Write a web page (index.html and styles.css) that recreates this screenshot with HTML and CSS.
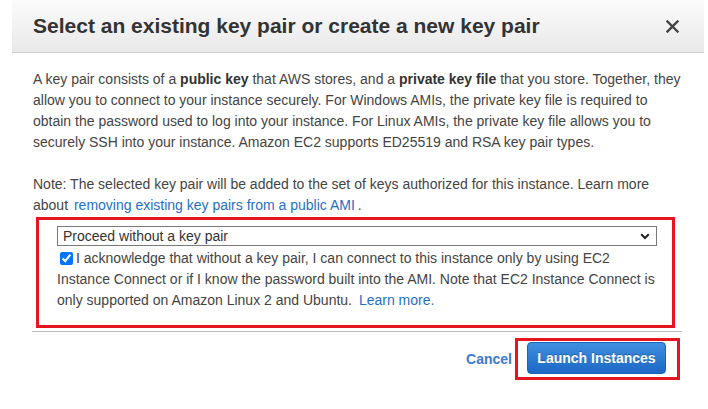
FILE: index.html
```html
<!DOCTYPE html>
<html lang="en">
<head>
<meta charset="utf-8">
<title>Select key pair</title>
<link rel="stylesheet" href="styles.css">
</head>
<body>
<div class="modal">
  <div class="modal-header">
    <h2 class="modal-title">Select an existing key pair or create a new key pair</h2>
    <svg class="close" width="13" height="13" viewBox="0 0 13 13" aria-label="Close">
      <path d="M1.5 1.5 L11.5 11.5 M11.5 1.5 L1.5 11.5" stroke="#444" stroke-width="2.4" stroke-linecap="square"/>
    </svg>
  </div>
  <div class="modal-body">
    <p class="para">A key pair consists of a <b>public key</b> that AWS stores, and a <b>private key file</b> that you store. Together, they allow you to connect to your instance securely. For Windows AMIs, the private key file is required to obtain the password used to log into your instance. For Linux AMIs, the private key file allows you to securely SSH into your instance. Amazon EC2 supports ED25519 and RSA key pair types.</p>
    <p class="para note">Note: The selected key pair will be added to the set of keys authorized for this instance. Learn more about <a class="link inline-link" href="#">removing existing key pairs from a public AMI</a>.</p>
    <div class="highlight">
      <div class="select">
        <span class="select-text">Proceed without a key pair</span>
        <svg class="chevron" width="10" height="7" viewBox="0 0 10 7"><path d="M1.2 1.2 L5 5 L8.8 1.2" fill="none" stroke="#222" stroke-width="2"/></svg>
      </div>
      <label class="ack"><input type="checkbox" class="check" checked>I acknowledge that without a key pair, I can connect to this instance only by using EC2 Instance Connect or if I know the password built into the AMI. Note that EC2 Instance Connect is only supported on Amazon Linux 2 and Ubuntu. <a class="link more-link" href="#">Learn more.</a></label>
    </div>
    <div class="divider"></div>
    <div class="footer">
      <a class="cancel" href="#">Cancel</a>
      <div class="btn-highlight">
        <button class="primary">Launch Instances</button>
      </div>
    </div>
  </div>
</div>
</body>
</html>
```
FILE: styles.css
```css
html, body {
  margin: 0;
  padding: 0;
  background: #fff;
}
body {
  font-family: "Liberation Sans", Arial, sans-serif;
  color: #444;
  width: 708px;
  height: 409px;
  overflow: hidden;
}
.modal {
  margin-left: 12px;
  width: 692px;
}
.modal-header {
  height: 52px;
  border-bottom: 1px solid #cfcfcf;
  background: linear-gradient(to bottom, #fbfbfb, #e9e9e9);
  display: flex;
  align-items: center;
  justify-content: space-between;
  padding: 0 25px 0 21px;
}
.modal-title {
  margin: 0;
  font-size: 21px;
  font-weight: bold;
  color: #333;
  letter-spacing: 0;
}
.close {
  display: block;
  margin-top: 1px;
}
.modal-body {
  padding: 0 22px 0 20px;
}
.para {
  margin: 16px 0 0 0;
  font-size: 14px;
  line-height: 21px;
  padding-left: 1px;
}
.para b {
  color: #333;
}
.note {
  margin-top: 21px;
}
.link {
  color: #1f6fc5;
  text-decoration: none;
}
.inline-link {
  margin: 0 3px 0 2px;
}
.more-link {
  margin-left: 3px;
}
.highlight {
  margin: 1px 7px 0 4px;
  border: 3px solid #e5161f;
  padding: 6px 15px 14px 18px;
}
.select {
  height: 18px;
  border: 1px solid #7a7a7a;
  display: flex;
  align-items: center;
  justify-content: space-between;
  padding: 0 6px 0 5px;
  font-size: 14px;
  color: #333;
}
.chevron {
  display: block;
}
.ack {
  display: block;
  margin-top: 2px;
  font-size: 14px;
  line-height: 21px;
}
.check {
  width: 13px;
  height: 13px;
  margin: 0 3px 0 3px;
  vertical-align: -2px;
}
.divider {
  height: 1px;
  background: #bdbdbd;
  margin-top: 3px;
}
.footer {
  display: flex;
  justify-content: flex-end;
  align-items: center;
  padding: 6px 2px 0 0;
}
.cancel {
  font-size: 14px;
  font-weight: bold;
  color: #3a7bd5;
  text-decoration: none;
  margin-right: 3px;
}
.btn-highlight {
  border: 3px solid #e5161f;
  padding: 1px 11px 3px 9px;
  display: flex;
}
.primary {
  width: 139px;
  height: 32px;
  border: 1px solid #1c62b9;
  border-radius: 4px;
  background: linear-gradient(to bottom, #3f8fe1, #1c68c4);
  color: #fff;
  font-family: "Liberation Sans", Arial, sans-serif;
  font-size: 14px;
  font-weight: bold;
  text-shadow: 0 -1px 0 rgba(0,0,0,0.25);
  padding: 0;
  cursor: pointer;
}
```
